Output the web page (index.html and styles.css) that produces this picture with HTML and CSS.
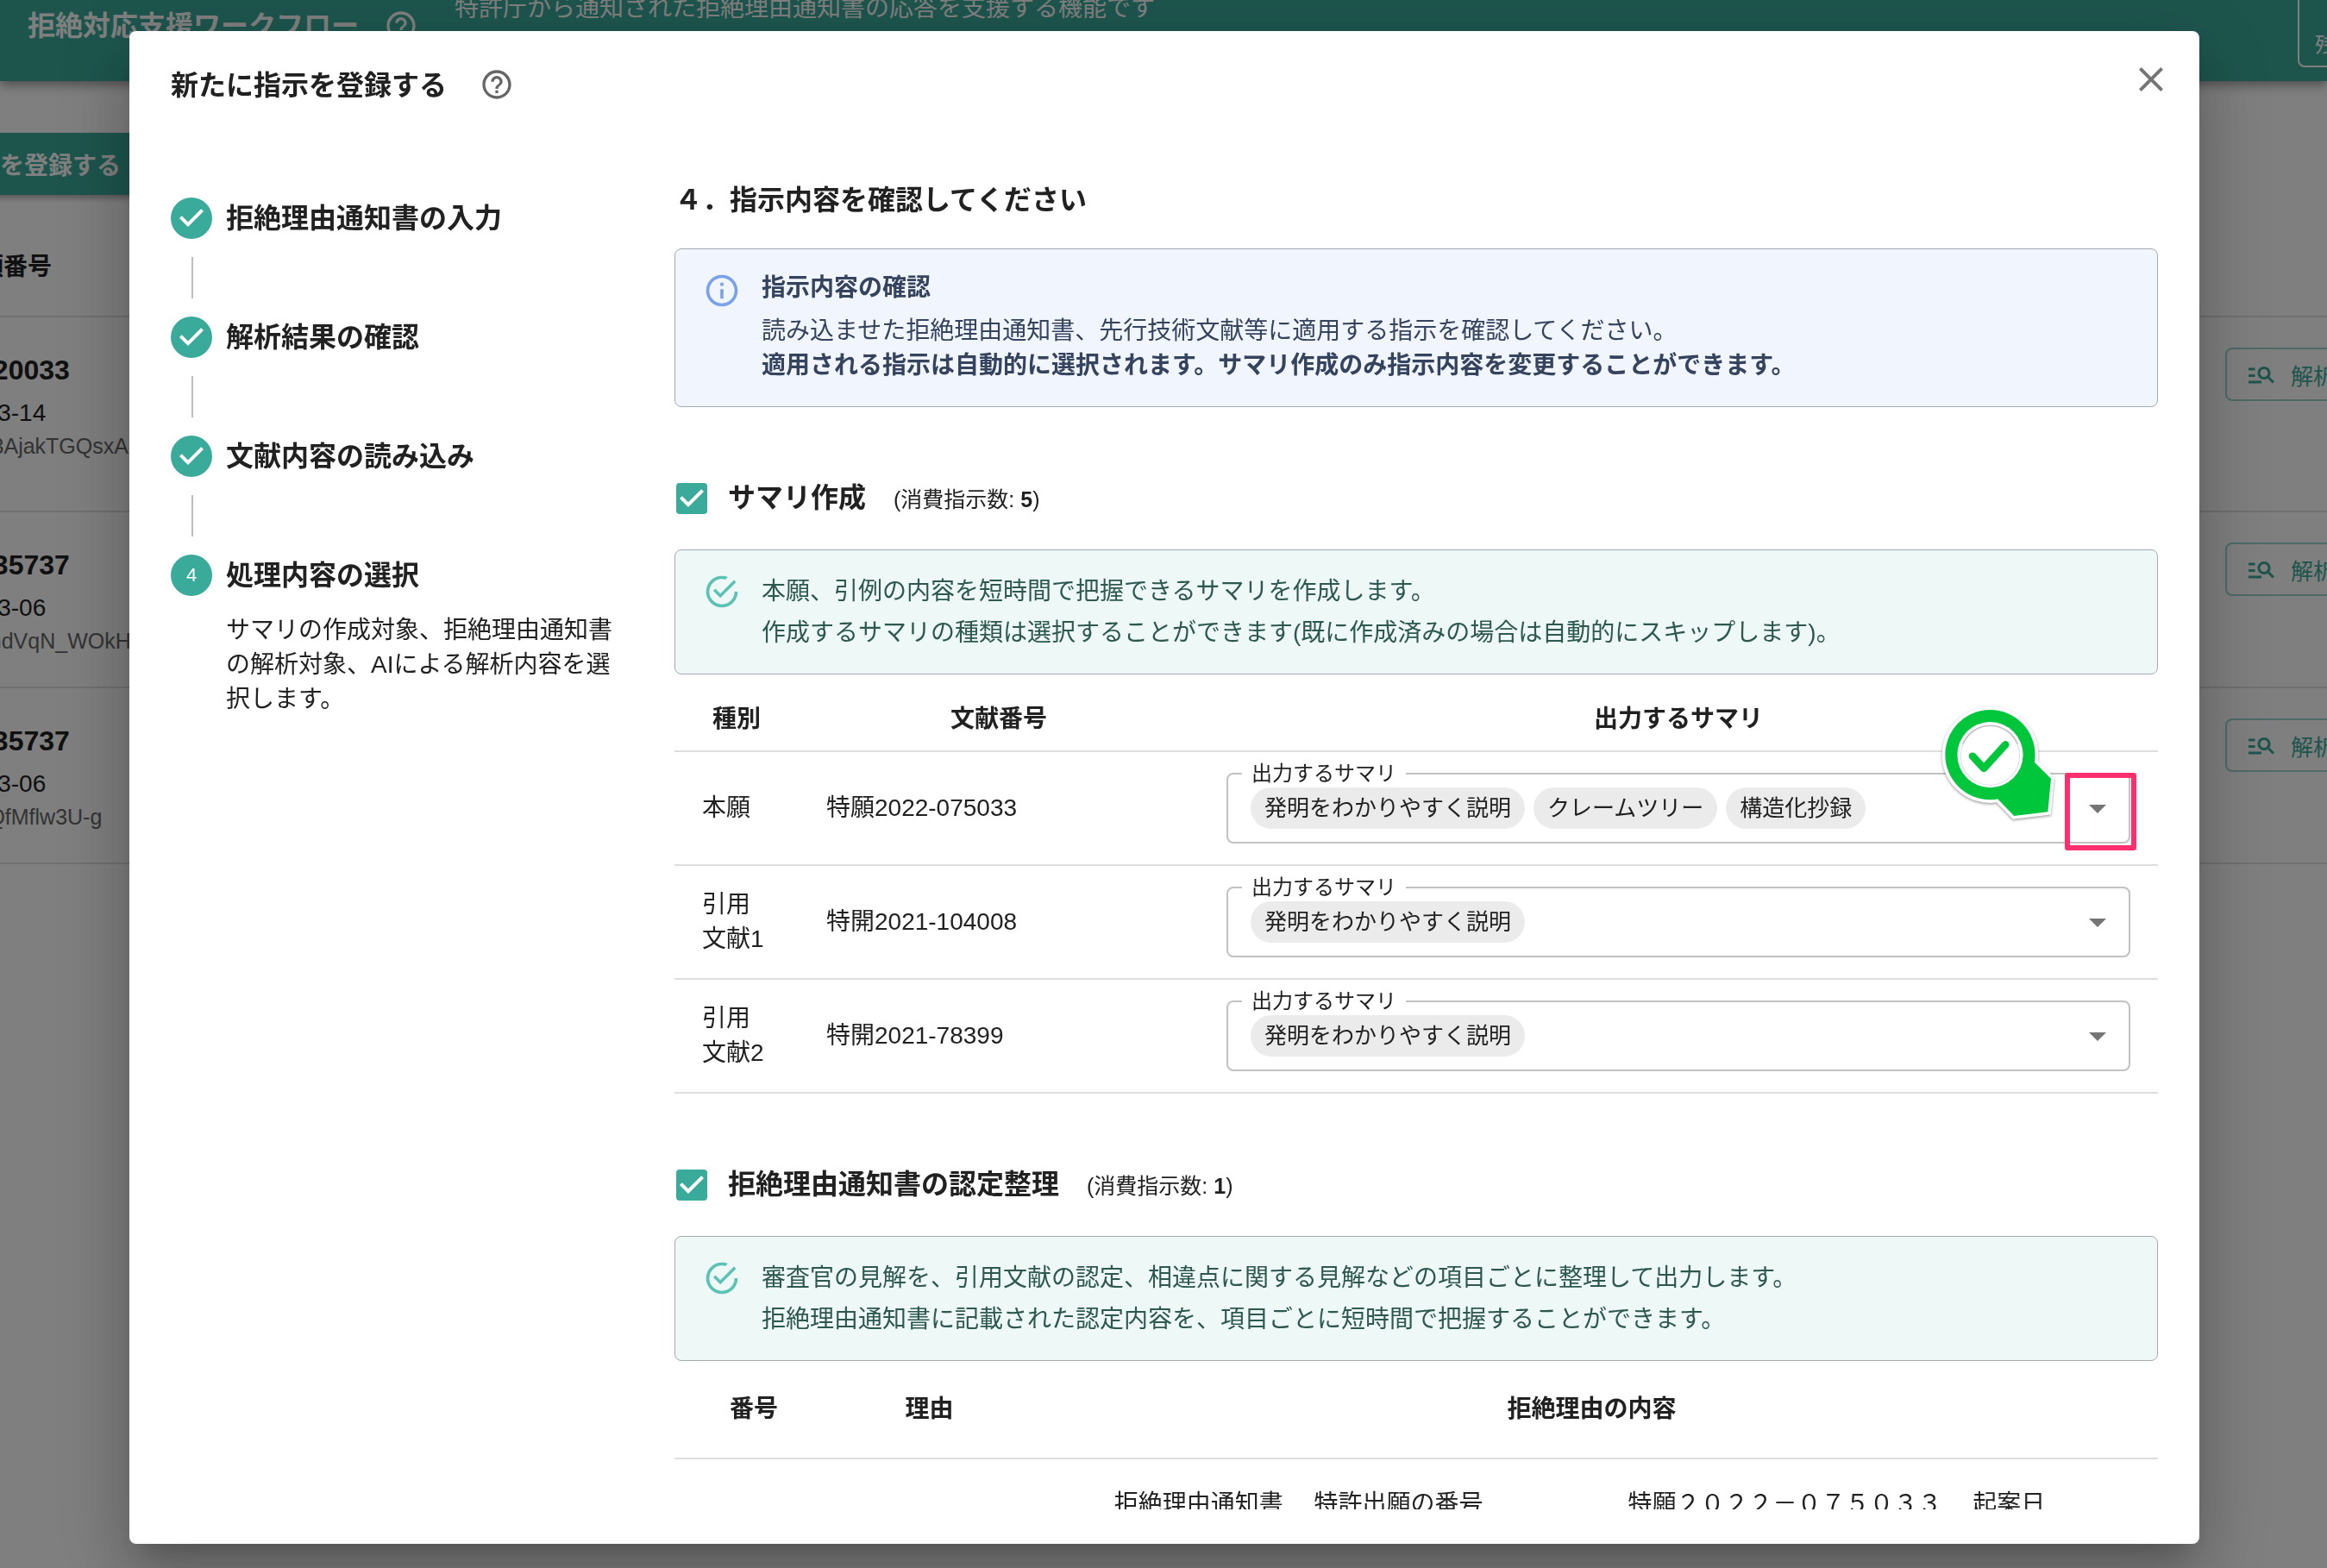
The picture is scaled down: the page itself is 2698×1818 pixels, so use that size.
FILE: index.html
```html
<!DOCTYPE html>
<html lang="ja">
<head>
  <meta charset="UTF-8">
  <meta name="viewport" content="width=device-width, initial-scale=1.0">
  <title>拒絶対応支援ワークフロー</title>
  <link rel="stylesheet" href="styles.css">
</head>
<body>
  <!-- shared icons -->
  <svg class="icon-defs" aria-hidden="true">
    <symbol id="icon-help" viewBox="0 0 24 24"><path d="M11 18h2v-2h-2v2zm1-16C6.48 2 2 6.48 2 12s4.48 10 10 10 10-4.48 10-10S17.52 2 12 2zm0 18c-4.41 0-8-3.59-8-8s3.59-8 8-8 8 3.59 8 8-3.59 8-8 8zm0-14c-2.21 0-4 1.79-4 4h2c0-1.1.9-2 2-2s2 .9 2 2c0 2-3 1.75-3 5h2c0-2.25 3-2.5 3-5 0-2.21-1.79-4-4-4z"/></symbol>
    <symbol id="icon-close" viewBox="0 0 24 24"><path d="M19 6.41L17.59 5 12 10.59 6.41 5 5 6.41 10.59 12 5 17.59 6.41 19 12 13.41 17.59 19 19 17.59 13.41 12z"/></symbol>
    <symbol id="icon-step-done" viewBox="0 0 24 24"><path d="M12 0a12 12 0 1 0 0 24 12 12 0 0 0 0-24zm-2 17l-5-5 1.4-1.4 3.6 3.6 7.6-7.6L19 8l-9 9z"/></symbol>
    <symbol id="icon-info" viewBox="0 0 24 24"><path d="M11,9H13V7H11M12,20C7.59,20 4,16.41 4,12C4,7.59 7.59,4 12,4C16.41,4 20,7.59 20,12C20,16.41 16.41,20 12,20M12,2A10,10 0 0,0 2,12A10,10 0 0,0 12,22A10,10 0 0,0 22,12A10,10 0 0,0 12,2M11,17H13V11H11V17Z"/></symbol>
    <symbol id="icon-success" viewBox="0 0 24 24"><path d="M20,12A8,8 0 0,1 12,20A8,8 0 0,1 4,12A8,8 0 0,1 12,4C12.76,4 13.5,4.11 14.2,4.31L15.77,2.74C14.61,2.26 13.34,2 12,2A10,10 0 0,0 2,12A10,10 0 0,0 12,22A10,10 0 0,0 22,12M7.91,10.08L6.5,11.5L11,16L21,6L19.59,4.58L11,13.17L7.91,10.08Z"/></symbol>
    <symbol id="icon-search-list" viewBox="0 0 24 24"><path d="M7 9H2V7h5v2zm0 3H2v2h5v-2zm13.59 7l-3.83-3.83c-.8.52-1.74.83-2.76.83-2.76 0-5-2.24-5-5s2.24-5 5-5 5 2.24 5 5c0 1.02-.31 1.96-.83 2.75L22 17.59 20.59 19zM17 11c0-1.65-1.35-3-3-3s-3 1.35-3 3 1.35 3 3 3 3-1.35 3-3zM2 19h10v-2H2v2z"/></symbol>
    <symbol id="icon-arrow" viewBox="0 0 24 24"><path d="M7 10l5 5 5-5z"/></symbol>
  </svg>

  <div class="page">
    <header class="app-bar">
      <h1 class="app-title">拒絶対応支援ワークフロー</h1>
      <svg class="app-help"><use href="#icon-help"/></svg>
      <p class="app-subtitle">特許庁から通知された拒絶理由通知書の応答を支援する機能です</p>
      <div class="quota">残り指示数</div>
    </header>

    <main class="case-list">
      <button class="register-btn" type="button">新たに指示を登録する</button>
      <table class="case-table">
        <thead>
          <tr><th>出願番号</th><th class="action-col"></th></tr>
        </thead>
        <tbody>
          <tr class="tall">
            <td>
              <p class="case-number">2022-20033</p>
              <p class="case-date">2024-03-14</p>
              <p class="case-id">xR7kW3AjakTGQsxA</p>
            </td>
            <td class="action-col"><button class="analyze-btn" type="button"><svg><use href="#icon-search-list"/></svg>解析結果</button></td>
          </tr>
          <tr>
            <td>
              <p class="case-number">2020-35737</p>
              <p class="case-date">2024-03-06</p>
              <p class="case-id">7kW5hndVqN_WOkH</p>
            </td>
            <td class="action-col"><button class="analyze-btn" type="button"><svg><use href="#icon-search-list"/></svg>解析結果</button></td>
          </tr>
          <tr>
            <td>
              <p class="case-number">2020-35737</p>
              <p class="case-date">2024-03-06</p>
              <p class="case-id">2kWmlQfMflw3U-g</p>
            </td>
            <td class="action-col"><button class="analyze-btn" type="button"><svg><use href="#icon-search-list"/></svg>解析結果</button></td>
          </tr>
        </tbody>
      </table>
    </main>
  </div>

  <div class="backdrop">
    <div class="dialog" role="dialog" aria-modal="true" aria-labelledby="dialogTitle">
      <div class="dialog-header">
        <h2 class="dialog-title" id="dialogTitle">新たに指示を登録する</h2>
        <svg class="dialog-help"><use href="#icon-help"/></svg>
        <button class="close-btn" type="button" aria-label="閉じる"><svg><use href="#icon-close"/></svg></button>
      </div>

      <div class="dialog-body">
        <ol class="stepper">
          <li class="step">
            <svg class="step-icon"><use href="#icon-step-done"/></svg>
            <span class="step-label">拒絶理由通知書の入力</span>
          </li>
          <li class="step">
            <svg class="step-icon"><use href="#icon-step-done"/></svg>
            <span class="step-label">解析結果の確認</span>
          </li>
          <li class="step">
            <svg class="step-icon"><use href="#icon-step-done"/></svg>
            <span class="step-label">文献内容の読み込み</span>
          </li>
          <li class="step current">
            <span class="step-number">4</span>
            <span class="step-label">処理内容の選択</span>
            <p class="step-text">サマリの作成対象、拒絶理由通知書の解析対象、AIによる解析内容を選択します。</p>
          </li>
        </ol>

        <div class="content">
          <h3 class="content-title">４．指示内容を確認してください</h3>

          <div class="alert info">
            <svg class="alert-icon"><use href="#icon-info"/></svg>
            <div class="alert-message">
              <h4>指示内容の確認</h4>
              <p>読み込ませた拒絶理由通知書、先行技術文献等に適用する指示を確認してください。<br>
              <strong>適用される指示は自動的に選択されます。サマリ作成のみ指示内容を変更することができます。</strong></p>
            </div>
          </div>

          <section>
            <div class="section-head">
              <input type="checkbox" id="summaryCheck" checked>
              <label for="summaryCheck">サマリ作成 <small>(消費指示数: <b>5</b>)</small></label>
            </div>
            <div class="alert success">
              <svg class="alert-icon"><use href="#icon-success"/></svg>
              <div class="alert-message">
                <p>本願、引例の内容を短時間で把握できるサマリを作成します。</p>
                <p>作成するサマリの種類は選択することができます(既に作成済みの場合は自動的にスキップします)。</p>
              </div>
            </div>
            <table class="summary-table">
              <thead>
                <tr><th class="col-kind">種別</th><th class="col-doc">文献番号</th><th>出力するサマリ</th></tr>
              </thead>
              <tbody>
                <tr>
                  <td>本願</td>
                  <td>特願2022-075033</td>
                  <td class="field-cell">
                    <div class="field">
                      <fieldset>
                        <legend><label for="summary1">出力するサマリ</label></legend>
                        <div class="chips">
                          <span class="chip">発明をわかりやすく説明</span>
                          <span class="chip">クレームツリー</span>
                          <span class="chip">構造化抄録</span>
                          <select id="summary1"><option value=""></option></select>
                          <svg class="arrow"><use href="#icon-arrow"/></svg>
                        </div>
                      </fieldset>
                      <!-- guide marker on the drop-down arrow -->
                      <svg class="pin" viewBox="150 780 410 410">
                        <g class="pin-shape">
                          <circle cx="322" cy="945" r="156"/>
                          <path d="M475 970L533 1028L522 1143L405 1157L350 1100Z"/>
                        </g>
                        <g class="pin-fill">
                          <circle cx="322" cy="945" r="156"/>
                          <path d="M475 970L533 1028L522 1143L405 1157L350 1100L322 945Z"/>
                        </g>
                        <circle cx="322" cy="945" r="114" fill="#fff"/>
                        <circle cx="322" cy="948" r="102" fill="none" stroke="#ddd" stroke-width="3"/>
                        <path d="M227 908A102 102 0 0 1 417 908" fill="none" stroke="#bbb" stroke-width="4"/>
                        <path class="pin-check" d="M261 950L300 992L375 910"/>
                      </svg>
                      <div class="highlight"></div>
                    </div>
                  </td>
                </tr>
                <tr>
                  <td>引用文献1</td>
                  <td>特開2021-104008</td>
                  <td class="field-cell">
                    <div class="field">
                      <fieldset>
                        <legend><label for="summary2">出力するサマリ</label></legend>
                        <div class="chips">
                          <span class="chip">発明をわかりやすく説明</span>
                          <select id="summary2"><option value=""></option></select>
                          <svg class="arrow"><use href="#icon-arrow"/></svg>
                        </div>
                      </fieldset>
                    </div>
                  </td>
                </tr>
                <tr>
                  <td>引用文献2</td>
                  <td>特開2021-78399</td>
                  <td class="field-cell">
                    <div class="field">
                      <fieldset>
                        <legend><label for="summary3">出力するサマリ</label></legend>
                        <div class="chips">
                          <span class="chip">発明をわかりやすく説明</span>
                          <select id="summary3"><option value=""></option></select>
                          <svg class="arrow"><use href="#icon-arrow"/></svg>
                        </div>
                      </fieldset>
                    </div>
                  </td>
                </tr>
              </tbody>
            </table>
          </section>

          <section>
            <div class="section-head">
              <input type="checkbox" id="reasonCheck" checked>
              <label for="reasonCheck">拒絶理由通知書の認定整理 <small>(消費指示数: <b>1</b>)</small></label>
            </div>
            <div class="alert success">
              <svg class="alert-icon"><use href="#icon-success"/></svg>
              <div class="alert-message">
                <p>審査官の見解を、引用文献の認定、相違点に関する見解などの項目ごとに整理して出力します。</p>
                <p>拒絶理由通知書に記載された認定内容を、項目ごとに短時間で把握することができます。</p>
              </div>
            </div>
            <table class="reason-table">
              <thead>
                <tr><th class="col-no">番号</th><th class="col-reason">理由</th><th>拒絶理由の内容</th></tr>
              </thead>
              <tbody>
                <tr><td></td><td></td><td class="reason-text">拒絶理由通知書　 特許出願の番号　　　　　　特願２０２２－０７５０３３　 起案日　</td></tr>
              </tbody>
            </table>
          </section>
        </div>
      </div>
    </div>
  </div>
</body>
</html>
```

FILE: styles.css
```css
* { box-sizing: border-box; }

body {
  margin: 0;
  height: 100vh;
  overflow: hidden;
  font-family: "Liberation Sans", "Noto Sans CJK JP", sans-serif;
  font-size: 28px;
  line-height: 40px;
  color: #212121;
  background: #ffffff;
}

h1, h2, h3, h4, p, ol { margin: 0; padding: 0; }
button, select, input { font-family: inherit; margin: 0; }
svg { display: block; flex-shrink: 0; fill: currentColor; }
table { width: 100%; border-spacing: 0; table-layout: fixed; }
.icon-defs { display: none; }

/* page behind the dialog */
.page { height: 100vh; overflow: hidden; }

.app-bar {
  display: flex;
  align-items: flex-start;
  height: 128px;
  margin-top: -34px;
  padding: 24px 0 0 32px;
  background: #3aab9b;
  color: #ffffff;
  box-shadow: 0 4px 8px -2px rgba(0, 0, 0, 0.2), 0 8px 10px rgba(0, 0, 0, 0.14), 0 2px 20px rgba(0, 0, 0, 0.12);
}
.app-title { font-size: 32px; margin-top: 20px; }
.app-help { width: 40px; height: 40px; margin: 20px 0 0 29px; }
.app-subtitle { margin-left: 42px; }
.quota {
  width: 240px;
  height: 120px;
  margin: -32px -206px 0 auto;
  padding: 76px 0 0 18px;
  border: 2px solid #ffffff;
  border-radius: 8px;
  font-size: 24px;
  line-height: 32px;
}

.case-list { margin: 60px -180px 0; }
.register-btn {
  display: block;
  height: 72px;
  padding: 0 40px;
  border: none;
  border-radius: 8px;
  background: #3aab9b;
  color: #ffffff;
  font-size: 28px;
  font-weight: bold;
  box-shadow: 0 4px 6px rgba(0, 0, 0, 0.3);
}
.case-table { margin-top: 24px; }
.case-table th { height: 118px; text-align: left; padding: 4px 0 0 128px; border-bottom: 2px solid #e0e0e0; }
.case-table td { height: 204px; vertical-align: top; padding: 41px 0 0 90px; border-bottom: 2px solid #e0e0e0; }
.case-table .tall td { height: 226px; }
.case-table .action-col { width: 298px; padding: 35px 0 0; }
.case-number { font-size: 32px; font-weight: bold; }
.case-date { margin-top: 10px; }
.case-id { font-size: 25px; line-height: 36px; color: #666666; white-space: nowrap; }
.analyze-btn {
  display: flex;
  align-items: center;
  gap: 16px;
  height: 62px;
  padding: 0 22px;
  border: 2px solid rgba(58, 171, 155, 0.5);
  border-radius: 8px;
  background: none;
  color: #3aab9b;
  font-size: 26px;
}
.analyze-btn svg { width: 36px; height: 36px; }

/* dialog */
.backdrop {
  position: fixed;
  inset: 0;
  display: flex;
  padding: 36px 148px 28px 150px;
  background: rgba(0, 0, 0, 0.5);
}
.dialog {
  flex: 1;
  min-width: 0;
  display: flex;
  flex-direction: column;
  padding-bottom: 40px;
  border-radius: 8px;
  background: #ffffff;
  box-shadow: 0 22px 30px -14px rgba(0, 0, 0, 0.2), 0 48px 76px 6px rgba(0, 0, 0, 0.14), 0 18px 92px 16px rgba(0, 0, 0, 0.12);
}
.dialog-header {
  display: flex;
  align-items: flex-start;
  flex-shrink: 0;
  height: 176px;
  padding: 32px 32px 0 48px;
}
.dialog-title { font-size: 32px; margin-top: 11px; }
.dialog-help { width: 40px; height: 40px; margin: 10px 0 0 38px; color: #666666; }
.close-btn { margin-left: auto; padding: 0; border: none; background: none; color: #757575; cursor: pointer; }
.close-btn svg { width: 48px; height: 48px; }

.dialog-body {
  flex: 1;
  min-height: 0;
  display: flex;
  overflow: hidden;
  padding: 0 48px;
}

.stepper { flex: 0 0 584px; padding: 17px 54px 0 0; list-style: none; }
.step { display: flex; flex-wrap: wrap; align-items: center; column-gap: 16px; }
.step::after {
  content: "";
  flex-basis: 100%;
  height: 48px;
  margin: 21px 0 21px 24px;
  border-left: 2px solid #bdbdbd;
}
.step.current::after { display: none; }
.step-icon { width: 48px; height: 48px; color: #3aab9b; }
.step-number {
  width: 48px;
  border-radius: 50%;
  background: #3aab9b;
  color: #ffffff;
  font-size: 22px;
  line-height: 48px;
  text-align: center;
}
.step-label { font-size: 32px; font-weight: bold; }
.step-text { padding: 20px 0 0 64px; }

.content { flex: 1; min-width: 0; }
.content-title { font-size: 32px; }

.alert { display: flex; gap: 24px; padding: 12px 32px; border: 1px solid #a3abb0; border-radius: 8px; }
.alert-icon { width: 44px; height: 44px; margin-top: 14px; }
.alert.info { margin-top: 36px; background: #f1f6fe; color: #35435f; }
.alert.info .alert-icon { color: #7aa2ea; }
.alert.info .alert-message { padding: 13px 0 15px; }
.alert.info h4 { margin-bottom: 10px; }
.alert.success { margin-top: 35px; background: #eef8f7; color: #2d5850; }
.alert.success .alert-icon { color: #5cc3b4; }
.alert.success .alert-message { display: flex; flex-direction: column; gap: 8px; padding: 16px 0 15px; }

section { margin-top: 82px; }
.section-head { display: flex; align-items: center; gap: 24px; height: 48px; padding-left: 2px; }
.section-head label { display: flex; align-items: baseline; gap: 32px; font-size: 32px; font-weight: bold; }
.section-head small { font-size: 25px; font-weight: normal; }
.section-head input {
  appearance: none;
  width: 36px;
  height: 36px;
  border: 2px solid #3aab9b;
  border-radius: 4px;
}
.section-head input:checked {
  border: none;
  background: #3aab9b url("data:image/svg+xml,%3Csvg xmlns='http://www.w3.org/2000/svg' viewBox='3 3 18 18'%3E%3Cpath fill='%23fff' d='M10 17l-5-5 1.41-1.41L10 14.17l7.59-7.59L19 8z'/%3E%3C/svg%3E");
}

.content th, .content td { padding: 0 32px; border-bottom: 2px solid #dedede; }
.summary-table { margin-top: 16px; }
.summary-table th { height: 74px; }
.col-kind { width: 144px; }
.col-doc { width: 464px; }
.content .field-cell { padding: 13px 32px 24px; }

.field { position: relative; }
.field fieldset {
  min-width: 0;
  height: 93px;
  margin: 0;
  padding: 0 12px 0 16px;
  border: 2px solid #c2c2c2;
  border-radius: 8px;
}
.field legend { padding: 0 11px; font-size: 24px; line-height: 24px; }
.chips { display: flex; align-items: center; gap: 10px; padding: 4px 0 0 10px; }
.chip { padding: 0 16px; border-radius: 24px; background: #ebebeb; font-size: 26px; line-height: 48px; }
.chips select { flex: 1; min-width: 0; height: 48px; appearance: none; border: none; background: none; font-size: 26px; }
.arrow { width: 48px; height: 48px; color: #757575; pointer-events: none; }

.highlight {
  position: absolute;
  top: 11px;
  right: -7px;
  width: 83px;
  height: 90px;
  border: 6px solid #ff2f6f;
  border-radius: 3px;
}
.pin { position: absolute; top: -65px; right: 83px; width: 137px; height: 137px; overflow: visible; }
.pin-shape { fill: #ffffff; stroke: #ffffff; stroke-width: 22px; filter: drop-shadow(0 4px 4px rgba(0, 0, 0, 0.4)); }
.pin-fill { fill: #00c63c; }
.pin-check { fill: none; stroke: #00c63c; stroke-width: 26px; stroke-linecap: round; stroke-linejoin: round; }

.reason-table th { height: 114px; }
.col-no { width: 184px; }
.col-reason { width: 223px; }
.reason-table td { padding: 32px 0; }
.reason-text { text-align: center; white-space: pre; }
```
